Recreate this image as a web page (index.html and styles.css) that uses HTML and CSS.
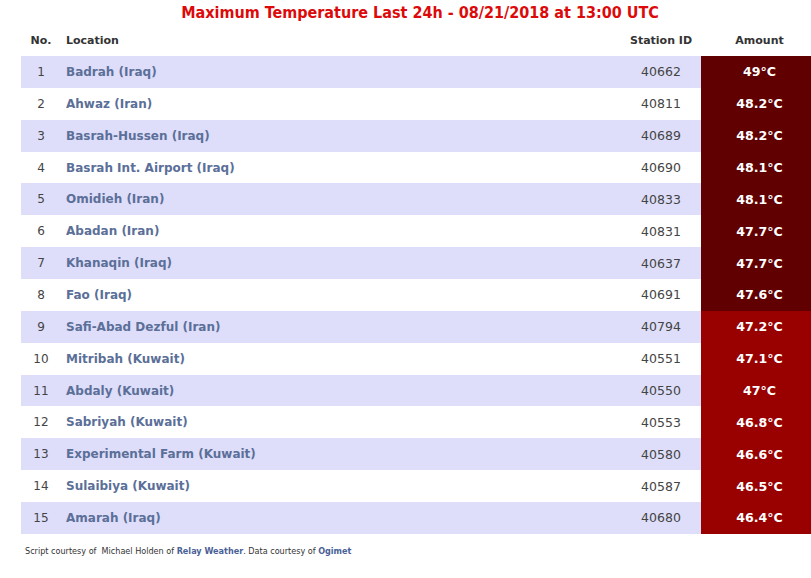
FILE: index.html
```html
<!DOCTYPE html>
<html>
<head>
<meta charset="utf-8">
<link rel="stylesheet" href="styles.css">
</head>
<body>
<div class="page">
  <h1 class="title">Maximum Temperature Last 24h - 08/21/2018 at 13:00 UTC</h1>
  <table class="temps">
    <thead>
      <tr><th class="c-no">No.</th><th class="c-loc">Location</th><th class="c-id">Station ID</th><th class="c-amt">Amount</th></tr>
    </thead>
    <tbody>
      <tr class="odd"><td class="c-no">1</td><td class="c-loc">Badrah (Iraq)</td><td class="c-id">40662</td><td class="c-amt hot1">49°C</td></tr>
      <tr><td class="c-no">2</td><td class="c-loc">Ahwaz (Iran)</td><td class="c-id">40811</td><td class="c-amt hot1">48.2°C</td></tr>
      <tr class="odd"><td class="c-no">3</td><td class="c-loc">Basrah-Hussen (Iraq)</td><td class="c-id">40689</td><td class="c-amt hot1">48.2°C</td></tr>
      <tr><td class="c-no">4</td><td class="c-loc">Basrah Int. Airport (Iraq)</td><td class="c-id">40690</td><td class="c-amt hot1">48.1°C</td></tr>
      <tr class="odd"><td class="c-no">5</td><td class="c-loc">Omidieh (Iran)</td><td class="c-id">40833</td><td class="c-amt hot1">48.1°C</td></tr>
      <tr><td class="c-no">6</td><td class="c-loc">Abadan (Iran)</td><td class="c-id">40831</td><td class="c-amt hot1">47.7°C</td></tr>
      <tr class="odd"><td class="c-no">7</td><td class="c-loc">Khanaqin (Iraq)</td><td class="c-id">40637</td><td class="c-amt hot1">47.7°C</td></tr>
      <tr><td class="c-no">8</td><td class="c-loc">Fao (Iraq)</td><td class="c-id">40691</td><td class="c-amt hot1">47.6°C</td></tr>
      <tr class="odd"><td class="c-no">9</td><td class="c-loc">Safi-Abad Dezful (Iran)</td><td class="c-id">40794</td><td class="c-amt hot2">47.2°C</td></tr>
      <tr><td class="c-no">10</td><td class="c-loc">Mitribah (Kuwait)</td><td class="c-id">40551</td><td class="c-amt hot2">47.1°C</td></tr>
      <tr class="odd"><td class="c-no">11</td><td class="c-loc">Abdaly (Kuwait)</td><td class="c-id">40550</td><td class="c-amt hot2">47°C</td></tr>
      <tr><td class="c-no">12</td><td class="c-loc">Sabriyah (Kuwait)</td><td class="c-id">40553</td><td class="c-amt hot2">46.8°C</td></tr>
      <tr class="odd"><td class="c-no">13</td><td class="c-loc">Experimental Farm (Kuwait)</td><td class="c-id">40580</td><td class="c-amt hot2">46.6°C</td></tr>
      <tr><td class="c-no">14</td><td class="c-loc">Sulaibiya (Kuwait)</td><td class="c-id">40587</td><td class="c-amt hot2">46.5°C</td></tr>
      <tr class="odd"><td class="c-no">15</td><td class="c-loc">Amarah (Iraq)</td><td class="c-id">40680</td><td class="c-amt hot2">46.4°C</td></tr>
    </tbody>
  </table>
  <p class="credits">Script courtesy of &nbsp;Michael Holden of <span class="lnk">Relay Weather</span>. Data courtesy of <span class="lnk">Ogimet</span></p>
</div>
</body>
</html>
```
FILE: styles.css
```css
html, body {
  margin: 0;
  padding: 0;
  background: #ffffff;
  overflow: hidden;
}
.page {
  width: 840px;
  font-family: "DejaVu Sans", Verdana, sans-serif;
  color: #333333;
}
.title {
  margin: 0;
  height: 26px;
  line-height: 26px;
  text-align: center;
  font-family: "DejaVu Sans Condensed", "DejaVu Sans", sans-serif;
  font-stretch: condensed;
  font-size: 16px;
  font-weight: bold;
  color: #dc0a0a;
}
.temps {
  margin-left: 21px;
  width: 797px;
  border-collapse: collapse;
  table-layout: fixed;
}
.temps th {
  height: 29px;
  font-size: 11px;
  font-weight: bold;
  color: #333333;
  padding: 0 0 1px 0;
}
.temps td {
  height: 31.86px;
  padding: 0;
  font-size: 12px;
}
.c-no { width: 40px; text-align: center; }
.c-loc { text-align: left; padding-left: 5px !important; }
.c-id { width: 80px; text-align: center; }
.c-amt { width: 117px; text-align: center; }
td.c-loc {
  font-weight: bold;
  color: #5b6f98;
}
td.c-no, td.c-id {
  color: #444444;
}
td.c-id { font-size: 12.5px; }
tr.odd td { background: #dedefa; }
td.c-amt {
  font-weight: bold;
  font-size: 12.6px;
  color: #ffffff;
}
tr td.hot1 { background: #600000; }
tr td.hot2 { background: #990000; }
.credits {
  margin: 12px 0 0 25px;
  font-size: 8.1px;
  color: #333333;
}
.lnk {
  color: #4a6196;
  font-weight: bold;
}
```
